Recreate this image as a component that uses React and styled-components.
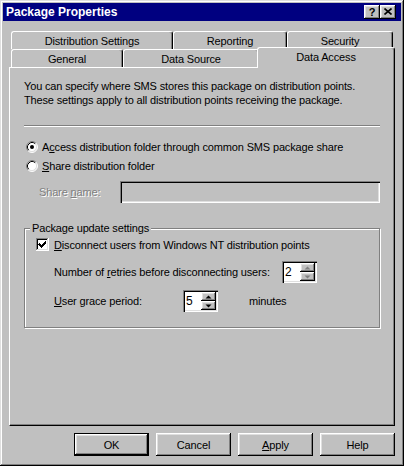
import React from "react";
import styled, { createGlobalStyle } from "styled-components";

const GlobalStyle = createGlobalStyle`
  html, body {
    margin: 0;
    padding: 0;
    background: #c0c0c0;
  }
  body {
    font-family: "Liberation Sans", Arial, sans-serif;
    font-size: 11px;
    letter-spacing: -0.15px;
    color: #000;
  }
  * {
    box-sizing: border-box;
  }
`;

const raised = `
  box-shadow: inset -1px -1px #000, inset 1px 1px #fff,
    inset -2px -2px #808080, inset 2px 2px #dfdfdf;
`;

const sunken = `
  box-shadow: inset 1px 1px #808080, inset 2px 2px #000,
    inset -1px -1px #fff, inset -2px -2px #dfdfdf;
`;

const Window = styled.div`
  width: 404px;
  height: 466px;
  padding: 3px;
  background: #c0c0c0;
  box-shadow: inset -1px -1px #000, inset 1px 1px #dfdfdf,
    inset -2px -2px #808080, inset 2px 2px #fff;
  display: flex;
  flex-direction: column;
`;

const TitleBar = styled.div`
  height: 18px;
  flex-shrink: 0;
  background: #000080;
  color: #fff;
  display: flex;
  align-items: center;
  padding: 0 5px 0 3px;
  font-size: 12px;
  font-weight: bold;
  letter-spacing: 0;
`;

const Title = styled.span`
  flex: 1;
`;

const TitleButtons = styled.div`
  display: flex;
`;

const TitleButton = styled.div`
  width: 16px;
  height: 14px;
  background: #c0c0c0;
  ${raised}
  display: flex;
  align-items: center;
  justify-content: center;
  color: #000;
  font-size: 11px;
  font-weight: bold;
  padding-bottom: 1px;
`;

const Content = styled.div`
  padding: 10px 6px 0 6px;
  display: flex;
  flex-direction: column;
`;

const TabRow = styled.div`
  display: flex;
  align-items: flex-end;
  height: 18px;
  padding-left: 2px;
`;

const Tab = styled.div`
  width: ${(p) => p.$w}px;
  height: ${(p) => (p.$active ? 21 : 18)}px;
  margin-bottom: ${(p) => (p.$active ? -1 : 0)}px;
  margin-left: ${(p) => (p.$active ? -2 : 0)}px;
  border-top: 1px solid #fff;
  border-left: 1px solid #fff;
  border-right: 1px solid #000;
  border-radius: 3px 3px 0 0;
  box-shadow: inset -1px 0 #808080;
  background: #c0c0c0;
  display: flex;
  align-items: center;
  justify-content: center;
  padding-bottom: ${(p) => (p.$active ? 2 : 0)}px;
  position: relative;
  z-index: ${(p) => (p.$active ? 2 : 1)};
`;

const Panel = styled.div`
  height: 359px;
  border: 1px solid;
  border-color: #fff #000 #000 #fff;
  box-shadow: inset -1px -1px #808080;
  padding: 11px 0 0 14px;
  display: flex;
  flex-direction: column;
`;

const Intro = styled.p`
  margin: 0;
  line-height: 14px;
`;

const Separator = styled.div`
  width: 356px;
  height: 2px;
  margin-top: 18px;
  border-top: 1px solid #808080;
  border-bottom: 1px solid #fff;
`;

const OptionRow = styled.div`
  display: flex;
  align-items: center;
  height: 19px;
  padding-left: 2px;
  gap: 4px;
  margin-top: ${(p) => p.$mt || 0}px;
`;

const ShareRow = styled.div`
  display: flex;
  align-items: center;
  height: 22px;
  margin-top: 6px;
  padding-left: 15px;
`;

const DisabledLabel = styled.span`
  width: 81px;
  color: #808080;
  text-shadow: 1px 1px #fff;
`;

const TextBox = styled.div`
  width: 260px;
  height: 22px;
  background: #c0c0c0;
  ${sunken}
`;

const Group = styled.div`
  position: relative;
  width: 356px;
  height: 100px;
  margin-top: 25px;
  border: 1px solid #808080;
  box-shadow: inset 1px 1px #fff, 1px 1px #fff;
  padding: 7px 0 0 11px;
  display: flex;
  flex-direction: column;
`;

const Legend = styled.span`
  position: absolute;
  top: -8px;
  left: 5px;
  padding: 0 2px;
  background: #c0c0c0;
  line-height: 14px;
`;

const CheckRow = styled.div`
  display: flex;
  align-items: center;
  height: 17px;
  gap: 5px;
`;

const FieldRow = styled.div`
  display: flex;
  align-items: center;
  height: 22px;
  margin-top: ${(p) => p.$mt}px;
  padding-left: 18px;
`;

const FieldLabel = styled.span`
  width: ${(p) => p.$w}px;
`;

const Spin = styled.div`
  width: 35px;
  height: 22px;
  background: #fff;
  ${sunken}
  padding: 2px;
  display: flex;
`;

const SpinValue = styled.span`
  flex: 1;
  padding-left: 1px;
  font-size: 12px;
  line-height: 18px;
`;

const SpinButtons = styled.div`
  width: 15px;
  display: flex;
  flex-direction: column;
`;

const SpinButton = styled.div`
  flex: 1;
  background: #c0c0c0;
  ${raised}
  display: flex;
  align-items: center;
  justify-content: center;
`;

const Unit = styled.span`
  margin-left: 31px;
`;

const ButtonRow = styled.div`
  display: flex;
  justify-content: flex-end;
  gap: 7px;
  margin-top: 7px;
`;

const Button = styled.div`
  width: 75px;
  height: 23px;
  background: #c0c0c0;
  display: flex;
  align-items: center;
  justify-content: center;
  border: ${(p) => (p.$default ? "1px solid #000" : "none")};
  ${raised}
`;

const U = styled.span`
  text-decoration: underline;
`;

const Radio = ({ checked }) => (
  <svg width="12" height="12" viewBox="0 0 12 12">
    <circle cx="6" cy="6" r="5" fill="#fff" />
    <path d="M2.11 9.89 A5.5 5.5 0 0 1 9.89 2.11" stroke="#808080" fill="none" />
    <path d="M9.89 2.11 A5.5 5.5 0 0 1 2.11 9.89" stroke="#fff" fill="none" />
    <path d="M2.82 9.18 A4.5 4.5 0 0 1 9.18 2.82" stroke="#000" fill="none" />
    <path d="M9.18 2.82 A4.5 4.5 0 0 1 2.82 9.18" stroke="#dfdfdf" fill="none" />
    {checked && <circle cx="6" cy="6" r="2" fill="#000" />}
  </svg>
);

const Checkbox = () => (
  <svg width="13" height="13" viewBox="0 0 13 13" shapeRendering="crispEdges">
    <rect x="0" y="0" width="13" height="13" fill="#fff" />
    <path d="M0 0.5H12.5M0.5 0V13" stroke="#808080" />
    <path d="M1 1.5H11.5M1.5 1V12" stroke="#000" />
    <path d="M0 12.5H13M12.5 0V13" stroke="#fff" />
    <path d="M1 11.5H12M11.5 1V12" stroke="#dfdfdf" />
    <path d="M3 5h1v1h1v1h1v-1h1v-1h1v-1h1v-1h1v3h-1v1h-1v1h-1v1h-1v1h-1v-1h-1v-1h-1v-1h-1z" fill="#000" />
  </svg>
);

const Arrow = ({ down, color = "#000" }) => (
  <svg width="7" height="4" viewBox="0 0 7 4">
    <path d={down ? "M0.5 0.5H6.5L3.5 3.5Z" : "M0.5 3.5H6.5L3.5 0.5Z"} fill={color} />
  </svg>
);

const SpinBox = ({ value, arrowColor }) => (
  <Spin>
    <SpinValue>{value}</SpinValue>
    <SpinButtons>
      <SpinButton>
        <Arrow color={arrowColor} />
      </SpinButton>
      <SpinButton>
        <Arrow down color={arrowColor} />
      </SpinButton>
    </SpinButtons>
  </Spin>
);

const App = () => {
  return (
    <>
      <GlobalStyle />
      <Window>
        <TitleBar>
          <Title>Package Properties</Title>
          <TitleButtons>
            <TitleButton>?</TitleButton>
            <TitleButton>
              <svg width="8" height="7" viewBox="0 0 8 7">
                <path d="M0.5 0.5L7.5 6.5M7.5 0.5L0.5 6.5" stroke="#000" strokeWidth="1.6" />
              </svg>
            </TitleButton>
          </TitleButtons>
        </TitleBar>
        <Content>
          <TabRow>
            <Tab $w={162}>Distribution Settings</Tab>
            <Tab $w={114}>Reporting</Tab>
            <Tab $w={106}>Security</Tab>
          </TabRow>
          <TabRow>
            <Tab $w={112}>General</Tab>
            <Tab $w={136}>Data Source</Tab>
            <Tab $w={138} $active>
              Data Access
            </Tab>
          </TabRow>
          <Panel>
            <Intro>
              You can specify where SMS stores this package on distribution points.
              <br />
              These settings apply to all distribution points receiving the package.
            </Intro>
            <Separator />
            <OptionRow $mt={10}>
              <Radio checked />
              <span>
                A<U>c</U>cess distribution folder through common SMS package share
              </span>
            </OptionRow>
            <OptionRow>
              <Radio />
              <span>
                <U>S</U>hare distribution folder
              </span>
            </OptionRow>
            <ShareRow>
              <DisabledLabel>
                Share <U>n</U>ame:
              </DisabledLabel>
              <TextBox />
            </ShareRow>
            <Group>
              <Legend>Package update settings</Legend>
              <CheckRow>
                <Checkbox />
                <span>
                  <U>D</U>isconnect users from Windows NT distribution points
                </span>
              </CheckRow>
              <FieldRow $mt={8}>
                <FieldLabel $w={228}>
                  Number of <U>r</U>etries before disconnecting users:
                </FieldLabel>
                <SpinBox value="2" arrowColor="#808080" />
              </FieldRow>
              <FieldRow $mt={7}>
                <FieldLabel $w={129}>
                  <U>U</U>ser grace period:
                </FieldLabel>
                <SpinBox value="5" />
                <Unit>minutes</Unit>
              </FieldRow>
            </Group>
          </Panel>
          <ButtonRow>
            <Button $default>OK</Button>
            <Button>Cancel</Button>
            <Button>
              <span>
                <U>A</U>pply
              </span>
            </Button>
            <Button>Help</Button>
          </ButtonRow>
        </Content>
      </Window>
    </>
  );
};

export default App;
